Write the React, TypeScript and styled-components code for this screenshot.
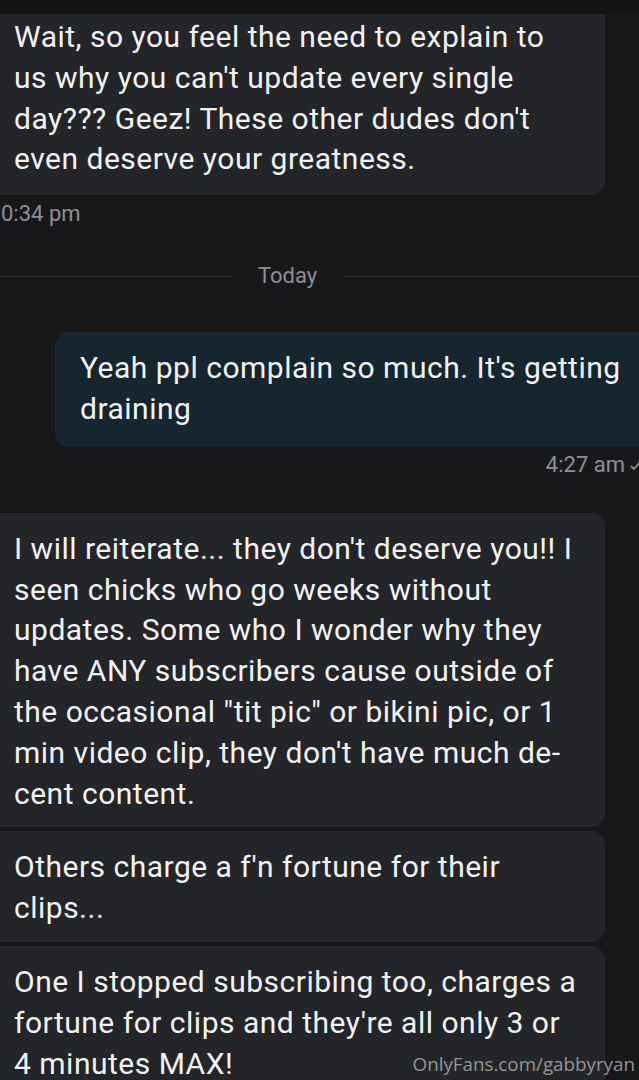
import { createGlobalStyle, styled } from "styled-components";

const GlobalStyle = createGlobalStyle`
  html, body {
    margin: 0;
    padding: 0;
    background: #18181a;
  }
  body {
    font-family: Roboto, "Noto Sans", sans-serif;
    overflow: hidden;
  }
`;

const Screen = styled.div`
  position: relative;
  width: 639px;
  height: 1080px;
  overflow: hidden;
  background: #18181a;
  display: flex;
  flex-direction: column;
`;

const TopStrip = styled.div`
  height: 14px;
  background: #141416;
  flex-shrink: 0;
`;

const Bubble = styled.div<{ $sent?: boolean; $top?: string; $clipTop?: boolean }>`
  box-sizing: border-box;
  margin-top: ${(p) => p.$top ?? "0"};
  margin-left: ${(p) => (p.$sent ? "55px" : "0")};
  width: ${(p) => (p.$sent ? "600px" : "605px")};
  padding: ${(p) =>
    p.$sent
      ? "16px 0 17px 25px"
      : p.$clipTop
        ? "3px 0 15px 14px"
        : "16px 0 13px 14px"};
  background: ${(p) => (p.$sent ? "#162630" : "#242529")};
  border-radius: ${(p) =>
    p.$sent ? "14px 0 0 14px" : p.$clipTop ? "0 0 14px 0" : "0 14px 14px 0"};
  color: #f2f2f2;
  font-size: 30px;
  letter-spacing: 0.5px;
  line-height: 40.8px;
  flex-shrink: 0;
`;

const TextLine = styled.span`
  display: block;
  white-space: nowrap;
`;

const Time = styled.div<{ $right?: boolean; $top?: string }>`
  display: flex;
  align-items: center;
  justify-content: ${(p) => (p.$right ? "flex-end" : "flex-start")};
  gap: 4px;
  margin-top: ${(p) => p.$top ?? "0"};
  padding: ${(p) => (p.$right ? "0" : "0 0 0 1px")};
  color: #8d9095;
  font-size: 22px;
  line-height: 24px;
  flex-shrink: 0;

  svg {
    margin-right: -4px;
  }
`;

const Divider = styled.div`
  display: flex;
  align-items: center;
  margin-top: 38px;
  color: #8d9095;
  font-size: 22px;
  line-height: 24px;
  flex-shrink: 0;
`;

const Line = styled.div<{ $width?: string }>`
  height: 1px;
  background: #2d2e32;
  width: ${(p) => p.$width ?? "auto"};
  flex: ${(p) => (p.$width ? "0 0 auto" : "1")};
`;

const DividerLabel = styled.span`
  margin: 0 26px;
`;

const Watermark = styled.div`
  position: absolute;
  right: 4px;
  bottom: 3px;
  font-family: "Open Sans", "Noto Sans", sans-serif;
  font-size: 18.8px;
  line-height: 26px;
  color: rgba(190, 190, 190, 0.75);
`;

const Check = () => (
  <svg width="14" height="14" viewBox="0 0 14 14">
    <path d="M2 8 L5 11 L12 3" fill="none" stroke="#8d9095" strokeWidth="1.8" />
  </svg>
);

const Lines = ({ lines }: { lines: string[] }) => (
  <>
    {lines.map((l, i) => (
      <TextLine key={i}>{l}</TextLine>
    ))}
  </>
);

export default function App() {
  return (
    <Screen>
      <GlobalStyle />
      <TopStrip />
      <Bubble $clipTop>
        <Lines
          lines={[
            "Wait, so you feel the need to explain to",
            "us why you can't update every single",
            "day??? Geez! These other dudes don't",
            "even deserve your greatness.",
          ]}
        />
      </Bubble>
      <Time $top="7px">0:34 pm</Time>
      <Divider>
        <Line $width="232px" />
        <DividerLabel>Today</DividerLabel>
        <Line />
      </Divider>
      <Bubble $sent $top="44px">
        <Lines lines={["Yeah ppl complain so much. It's getting", "draining"]} />
      </Bubble>
      <Time $right $top="6px">
        4:27 am
        <Check />
      </Time>
      <Bubble $top="36px">
        <Lines
          lines={[
            "I will reiterate... they don't deserve you!! I",
            "seen chicks who go weeks without",
            "updates. Some who I wonder why they",
            "have ANY subscribers cause outside of",
            "the occasional \"tit pic\" or bikini pic, or 1",
            "min video clip, they don't have much de-",
            "cent content.",
          ]}
        />
      </Bubble>
      <Bubble $top="4px">
        <Lines lines={["Others charge a f'n fortune for their", "clips..."]} />
      </Bubble>
      <Bubble $top="4px">
        <Lines
          lines={[
            "One I stopped subscribing too, charges a",
            "fortune for clips and they're all only 3 or",
            "4 minutes MAX!",
          ]}
        />
      </Bubble>
      <Watermark>OnlyFans.com/gabbyryan</Watermark>
    </Screen>
  );
}
